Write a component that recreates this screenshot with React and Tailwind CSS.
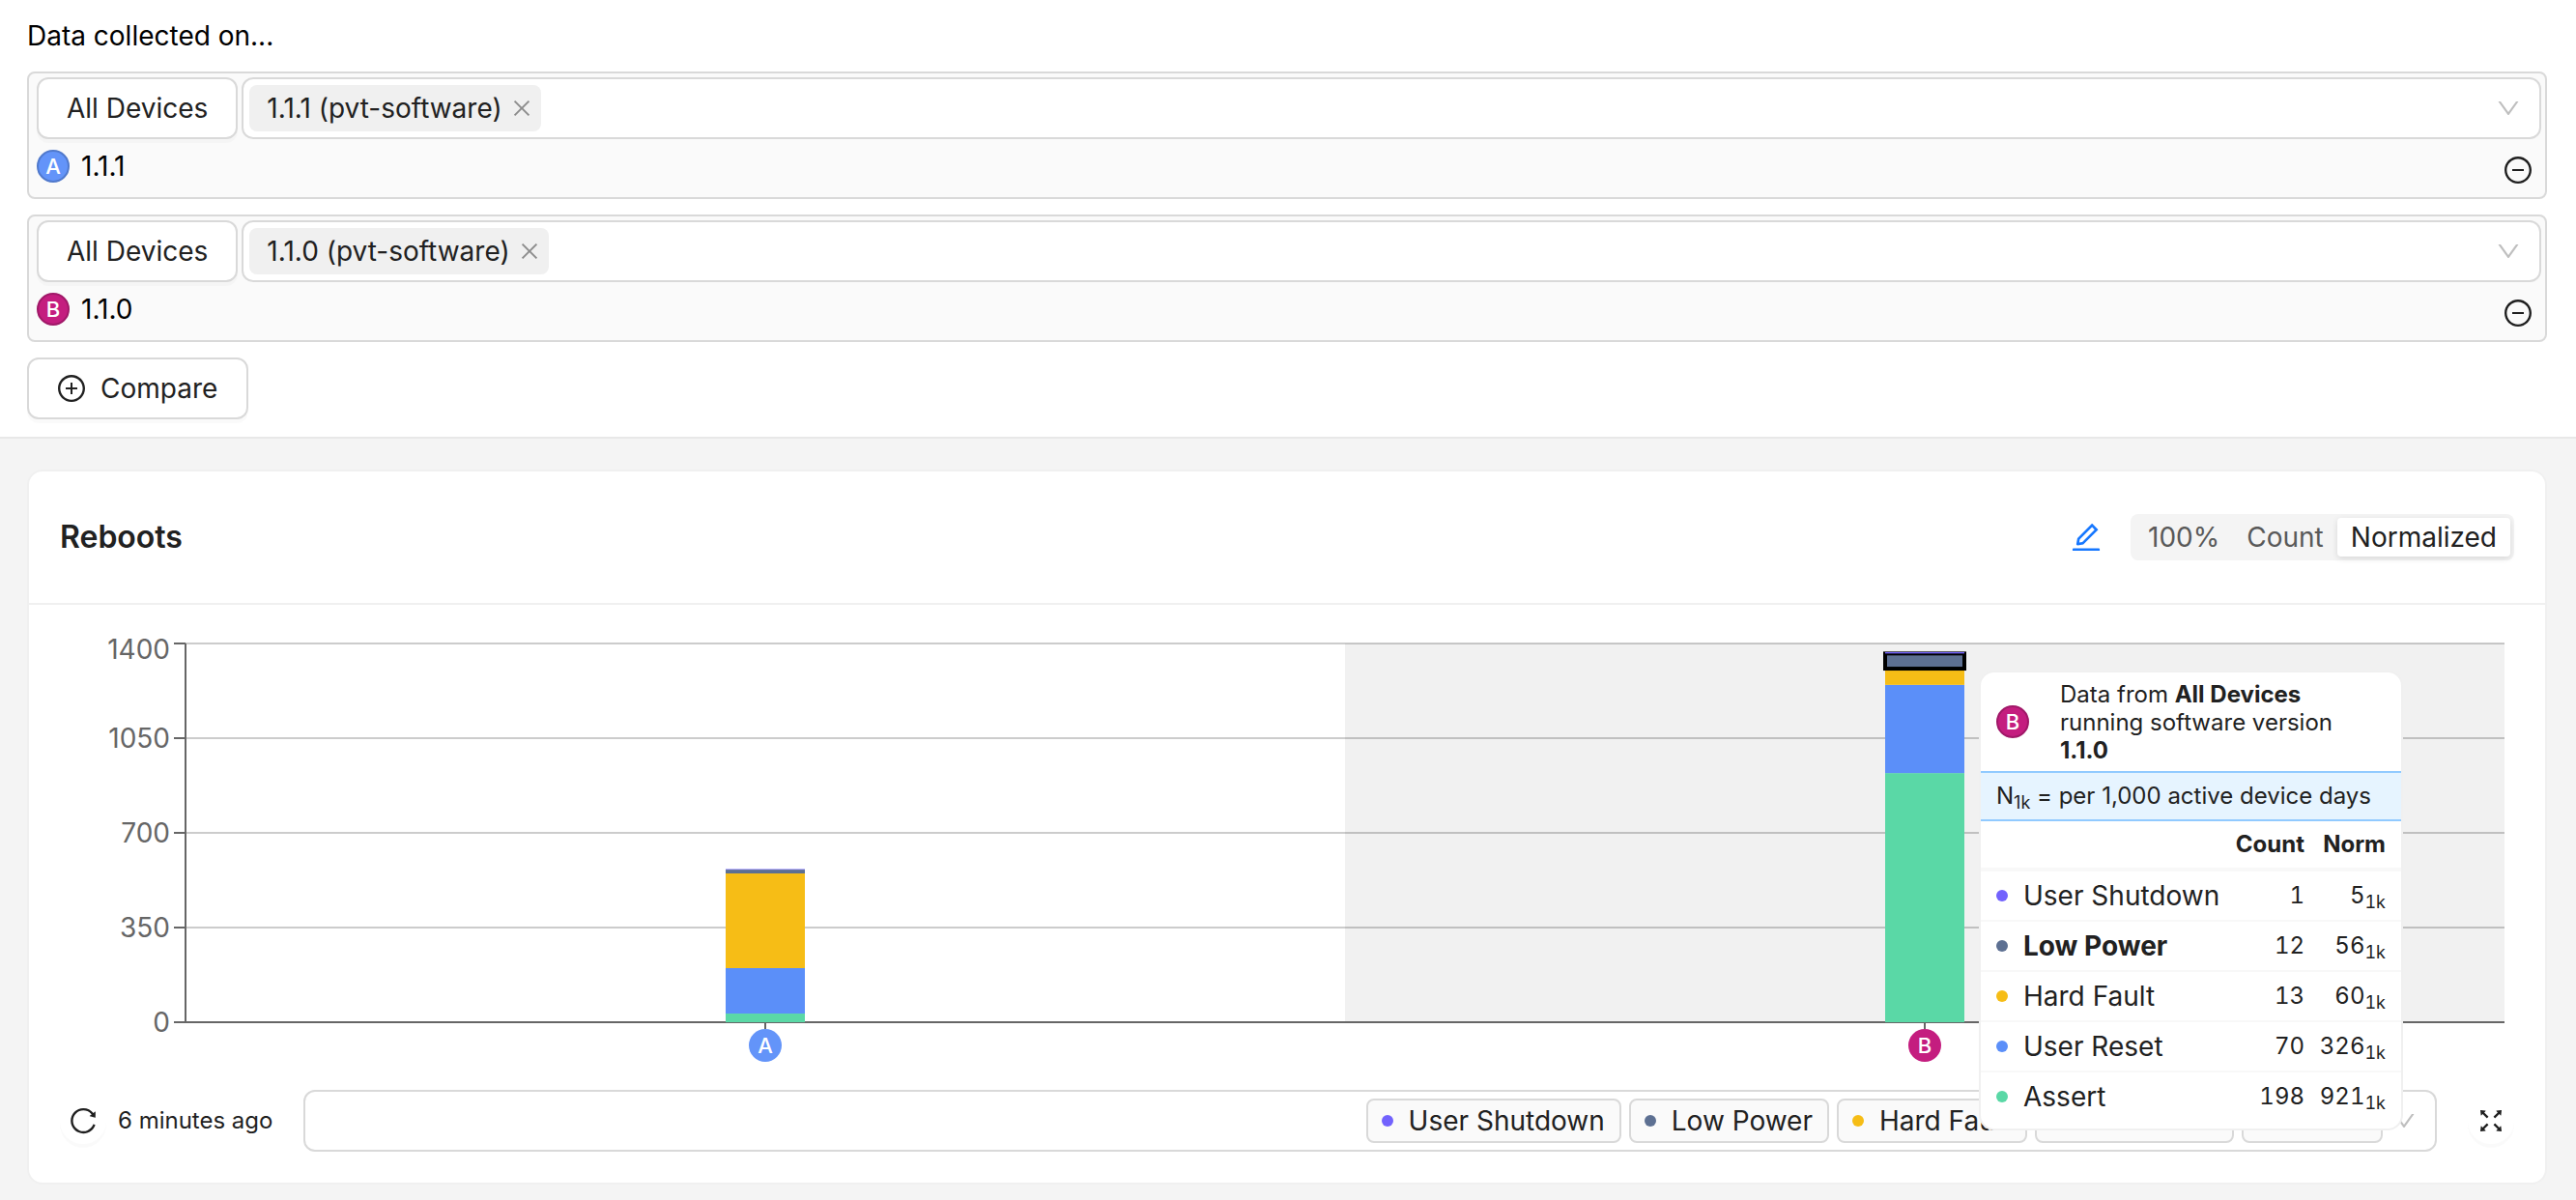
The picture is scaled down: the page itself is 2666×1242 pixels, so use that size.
import { useState } from 'react';
import {
  AiOutlineClose,
  AiOutlineDown,
  AiOutlineEdit,
  AiOutlineFullscreen,
  AiOutlineMinusCircle,
  AiOutlinePlusCircle,
  AiOutlineReload,
} from 'react-icons/ai';

const BADGE_COLORS = { A: '#6394f9', B: '#c41d7f' };

const REASONS = [
  { name: 'User Shutdown', color: '#7262fd', count: 1, norm: 5 },
  { name: 'Low Power', color: '#5d7092', count: 12, norm: 56 },
  { name: 'Hard Fault', color: '#f6bd16', count: 13, norm: 60 },
  { name: 'User Reset', color: '#5b8ff9', count: 70, norm: 326 },
  { name: 'Assert', color: '#5ad8a6', count: 198, norm: 921 },
];

// Normalized values, stacked bottom to top
const BARS = [
  { id: 'A', x: '25%', values: [32, 168, 350, 14, 2] },
  { id: 'B', x: '75%', values: [921, 326, 60, 56, 5] },
];

const STACK = [...REASONS].reverse();
const TICKS = [1400, 1050, 700, 350, 0];
const BASELINE = 408;
const PX_PER_UNIT = 0.28;

const Badge = ({ id }) => (
  <span
    className={`flex size-[34px] shrink-0 items-center justify-center rounded-full border-2 text-[22px] font-medium leading-none text-white ${
      id === 'A' ? 'border-[#5079cc] bg-[#6394f9]' : 'border-[#a01868] bg-[#c41d7f]'
    }`}
  >
    {id}
  </span>
);

const DeviceGroup = ({ id, version }) => (
  <section className="mb-4 rounded-lg border-2 border-[#d9d9d9] bg-[#fafafa] py-1 pl-2 pr-1">
    <div className="flex gap-1">
      <button className="h-16 rounded-xl border-2 border-[#d9d9d9] bg-white px-[29px] text-[#212121] shadow-[0_4px_0_rgba(0,0,0,0.02)]">
        All Devices
      </button>
      <div className="flex h-16 flex-1 items-center rounded-xl border-2 border-[#d9d9d9] bg-white pl-1.5 pr-[18px]">
        <span className="flex h-12 items-center gap-2 rounded-lg bg-[#f0f0f0] pl-[18px] pr-2 text-[#212121]">
          {version} (pvt-software)
          <button aria-label={`Remove ${version}`} className="text-[#8c8c8c]">
            <AiOutlineClose size={24} />
          </button>
        </span>
        <input
          role="combobox"
          aria-expanded="false"
          aria-label="Software version"
          className="min-w-0 flex-1 bg-transparent px-2 outline-none"
        />
        <AiOutlineDown size={28} className="text-[#bfbfbf]" />
      </div>
    </div>
    <div className="flex h-14 items-center gap-3">
      <Badge id={id} />
      <span className="flex-1">{version}</span>
      <button
        aria-label={`Remove group ${id}`}
        className="flex size-12 items-center justify-center self-end text-[#1f1f1f]"
      >
        <AiOutlineMinusCircle size={32} />
      </button>
    </div>
  </section>
);

const ModeSwitch = () => {
  const [mode, setMode] = useState('Normalized');

  return (
    <fieldset className="flex h-12 rounded-lg bg-[#f4f4f4] p-1">
      {['100%', 'Count', 'Normalized'].map((option) => (
        <label
          key={option}
          className={`relative flex items-center rounded px-3.5 ${
            mode === option
              ? 'bg-white text-[#212121] shadow-[0_2px_6px_rgba(0,0,0,0.12)]'
              : 'text-[#595959]'
          }`}
        >
          <input
            type="radio"
            name="mode"
            className="sr-only"
            checked={mode === option}
            onChange={() => setMode(option)}
          />
          {option}
        </label>
      ))}
    </fieldset>
  );
};

const Bar = ({ id, x, values }) => {
  let top = BASELINE;
  const segments = values.map((value, i) => {
    const height = value * PX_PER_UNIT;
    top -= height;
    return { ...STACK[i], y: top, height };
  });

  return (
    <svg x={x} className="overflow-visible">
      {segments.map((s) => (
        <rect
          key={s.name}
          x="-41"
          y={s.y}
          width="82"
          height={s.height}
          fill={s.color}
          stroke={id === 'B' && s.name === 'Low Power' ? '#000' : 'none'}
          strokeWidth="4"
        />
      ))}
      <line y1="409" y2="415" stroke="#666" strokeWidth="2" />
      <circle cy="432" r="17" fill={BADGE_COLORS[id]} />
      <text y="440" textAnchor="middle" fill="#fff" className="text-[22px] font-medium">
        {id}
      </text>
    </svg>
  );
};

const Tooltip = () => (
  <div className="absolute left-[calc(75%+56px)] top-11 w-[439px] overflow-hidden rounded-2xl border-2 border-[#f0f0f0] bg-white pb-1.5 text-2xl text-[#212121]">
    <div className="flex h-[102px] items-center gap-8 px-4 leading-[29px]">
      <Badge id="B" />
      <p>
        Data from <strong>All Devices</strong> running software version <strong>1.1.0</strong>
      </p>
    </div>
    <p className="flex h-[52px] items-center border-y-2 border-[#91caff] bg-[#e6f4ff] px-4">
      <span>
        N<sub className="text-lg leading-none">1k</sub> = per 1,000 active device days
      </span>
    </p>
    <table className="w-full border-separate border-spacing-0 text-right">
      <thead>
        <tr>
          <td className="h-[52px] border-b-4 border-[#f8f8f8] p-0"></td>
          <th className="border-b-4 border-[#f8f8f8] p-0 font-bold">Count</th>
          <th className="w-[100px] border-b-4 border-[#f8f8f8] p-0 pr-4 font-bold">Norm</th>
        </tr>
      </thead>
      <tbody className="leading-10">
        {REASONS.map((r) => (
          <tr key={r.name} className="group">
            <td className="h-[52px] border-b-2 border-[#f8f8f8] p-0 pl-4 group-last:border-transparent">
              <span
                className={`flex items-center gap-4 text-[28px] ${
                  r.name === 'Low Power' ? 'font-bold' : ''
                }`}
              >
                <span className="size-3 rounded-full" style={{ backgroundColor: r.color }} />
                {r.name}
              </span>
            </td>
            <td className="border-b-2 border-[#f8f8f8] p-0 tabular-nums group-last:border-transparent">
              {r.count}
            </td>
            <td className="border-b-2 border-[#f8f8f8] p-0 pr-4 tabular-nums group-last:border-transparent">
              {r.norm}
              <sub className="text-lg leading-none">1k</sub>
            </td>
          </tr>
        ))}
      </tbody>
    </table>
  </div>
);

const RebootsChart = () => (
  <div className="relative ml-[130px] mr-2.5">
    <svg className="block h-[462px] w-full overflow-visible">
      {TICKS.map((tick, i) => (
        <g key={tick}>
          <line x2="100%" y1={16 + i * 98} y2={16 + i * 98} stroke="#ccc" strokeWidth="2" />
          <line x1="-12" x2="0" y1={16 + i * 98} y2={16 + i * 98} stroke="#666" strokeWidth="2" />
          <text
            x="-16"
            y={(i === 0 ? 22 : 16 + i * 98) + 10}
            textAnchor="end"
            fill="#666"
            className="text-[28px]"
          >
            {tick}
          </text>
        </g>
      ))}
      <rect x="50%" y="16" width="50%" height="392" fillOpacity="0.055" />
      <line y1="16" y2="408" stroke="#666" strokeWidth="2" />
      <line x2="100%" y1="408" y2="408" stroke="#666" strokeWidth="2" />
      {BARS.map((bar) => (
        <Bar key={bar.id} {...bar} />
      ))}
    </svg>
    <Tooltip />
  </div>
);

const LegendSelect = () => (
  <div className="flex h-16 flex-1 items-center gap-2 rounded-xl border-2 border-[#d9d9d9] bg-white pr-[18px]">
    <input
      role="combobox"
      aria-expanded="false"
      aria-label="Reboot reasons"
      className="min-w-0 flex-1 bg-transparent px-3 outline-none"
    />
    {REASONS.map((r) => (
      <span
        key={r.name}
        className="flex h-[46px] items-center gap-4 rounded-lg border-2 border-[#d9d9d9] bg-[#fafafa] pl-3.5 pr-[15px] text-[#212121]"
      >
        <span className="size-3 rounded-full" style={{ backgroundColor: r.color }} />
        {r.name}
      </span>
    ))}
    <AiOutlineDown size={28} className="text-[#bfbfbf]" />
  </div>
);

const App = () => (
  <div className="min-h-screen bg-[#f4f4f4] font-['Inter',sans-serif] text-[28px] leading-[44px] text-black">
    <header className="border-b-2 border-[#e8e8e8] bg-white pb-[18px] pl-7 pr-[30px] pt-[15px]">
      <h1 className="mb-[15px]">Data collected on...</h1>
      <DeviceGroup id="A" version="1.1.1" />
      <DeviceGroup id="B" version="1.1.0" />
      <button className="flex h-16 items-center gap-3.5 rounded-xl border-2 border-[#d9d9d9] bg-white pl-7 pr-[30px] text-[#212121] shadow-[0_4px_0_rgba(0,0,0,0.02)]">
        <AiOutlinePlusCircle size={32} />
        Compare
      </button>
    </header>

    <main className="pb-4 pl-7 pr-[30px] pt-8">
      <section className="rounded-2xl border-2 border-[#f0f0f0] bg-white">
        <div className="flex h-[138px] items-center justify-between border-b-2 border-[#f0f0f0] px-8">
          <h2 className="text-[32px] font-semibold text-[#212121]">Reboots</h2>
          <div className="flex items-center gap-7">
            <button aria-label="Edit chart" className="text-[#1677ff]">
              <AiOutlineEdit size={36} />
            </button>
            <ModeSwitch />
          </div>
        </div>
        <div className="px-8 pb-8 pt-6">
          <RebootsChart />
          <div className="mt-4 flex items-center gap-8">
            <div className="flex items-center gap-3 text-2xl text-[#1f1f1f]">
              <button
                aria-label="Refresh"
                className="flex size-12 items-center justify-center rounded-full shadow-[0_4px_0_rgba(0,0,0,0.02)]"
              >
                <AiOutlineReload size={32} />
              </button>
              6 minutes ago
            </div>
            <LegendSelect />
            <button
              aria-label="Full screen"
              className="flex size-12 items-center justify-center rounded-full text-[#1f1f1f] shadow-[0_4px_0_rgba(0,0,0,0.02)]"
            >
              <AiOutlineFullscreen size={32} />
            </button>
          </div>
        </div>
      </section>
    </main>
  </div>
);

export default App;
